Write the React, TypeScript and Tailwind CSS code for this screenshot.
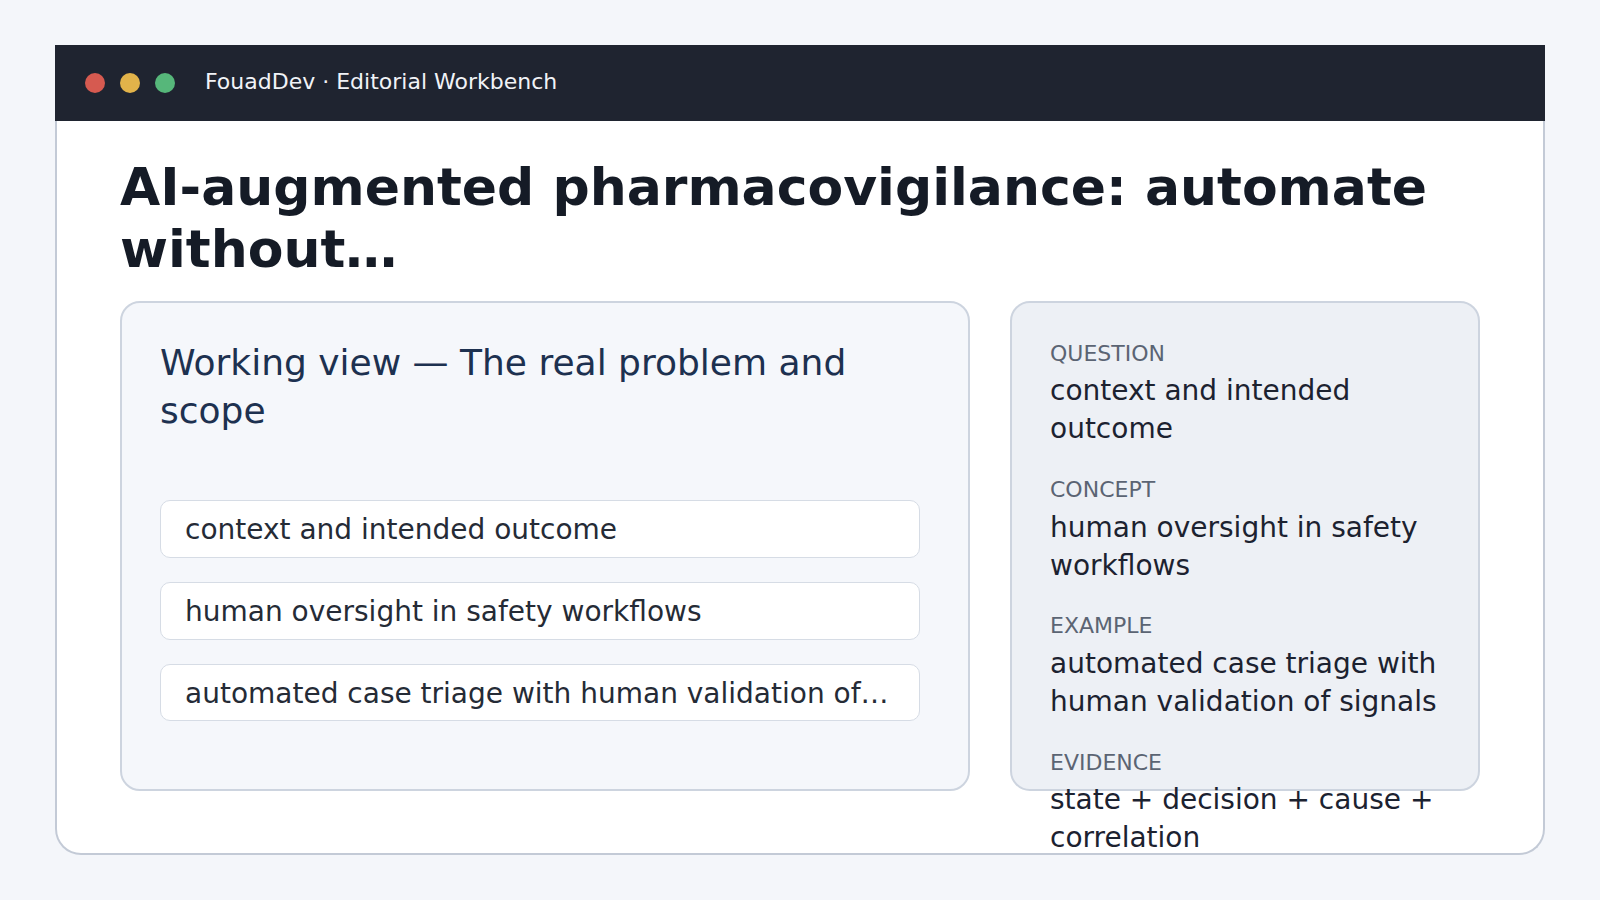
import React from 'react';

// Editorial workbench window: title bar, page heading, working view + notes sidebar

const steps = [
  'context and intended outcome',
  'human oversight in safety workflows',
  'automated case triage with human validation of signals',
];

const notes = [
  { label: 'Question', value: 'context and intended outcome' },
  { label: 'Concept', value: 'human oversight in safety workflows' },
  { label: 'Example', value: 'automated case triage with human validation of signals' },
  { label: 'Evidence', value: 'state + decision + cause + correlation' },
];

export default function App() {
  return (
    <div className="flex h-screen w-full items-center justify-center bg-[#f4f6fa] font-['DejaVu_Sans',sans-serif]">
      <div className="flex h-[810px] w-[1490px] flex-col">
        {/* Title bar */}
        <header className="flex h-[76px] shrink-0 items-center gap-[30px] bg-[#1f2430] pb-[3px] pl-[30px]">
          <div className="flex gap-[15px] pt-[3px]">
            <span className="h-5 w-5 rounded-full bg-[#d65a50]" />
            <span className="h-5 w-5 rounded-full bg-[#e2b34a]" />
            <span className="h-5 w-5 rounded-full bg-[#56b77a]" />
          </div>
          <span className="text-[22px] text-[#f1f3f7]">FouadDev · Editorial Workbench</span>
        </header>

        {/* Body */}
        <main className="flex min-h-0 flex-1 flex-col rounded-b-[26px] border-2 border-t-0 border-[#c3cad6] bg-white px-[63px] pt-[35px] pb-[62px]">
          <h1 className="mb-5 text-[52px] font-bold leading-[1.2] text-[#151b26]">
            AI-augmented pharmacovigilance: automate without…
          </h1>

          <div className="grid min-h-0 flex-1 grid-cols-[1fr_470px] grid-rows-1 gap-10">
            {/* Working view */}
            <section className="rounded-[20px] border-2 border-[#cdd4df] bg-[#f5f7fb] px-[38px] pt-9">
              <h2 className="text-[36px] leading-[1.35] text-[#1d3150]">
                Working view — The real problem and scope
              </h2>
              <ul className="mt-16 flex max-w-[760px] flex-col gap-6">
                {steps.map((step) => (
                  <li
                    key={step}
                    className="truncate rounded-[10px] border border-[#d6dce5] bg-white px-6 pt-[10px] pb-[8px] text-[28px] leading-[1.35] text-[#252b36]"
                  >
                    {step}
                  </li>
                ))}
              </ul>
            </section>

            {/* Notes sidebar */}
            <aside className="flex flex-col gap-[27px] rounded-[20px] border-2 border-[#cdd4df] bg-[#edf0f5] px-[38px] pt-9">
              {notes.map((note) => (
                <div key={note.label}>
                  <div className="mb-1 text-[22px] uppercase leading-[1.35] text-[#5b6473]">{note.label}</div>
                  <div className="text-[28px] leading-[1.35] text-[#1c2230]">{note.value}</div>
                </div>
              ))}
            </aside>
          </div>
        </main>
      </div>
    </div>
  );
}
